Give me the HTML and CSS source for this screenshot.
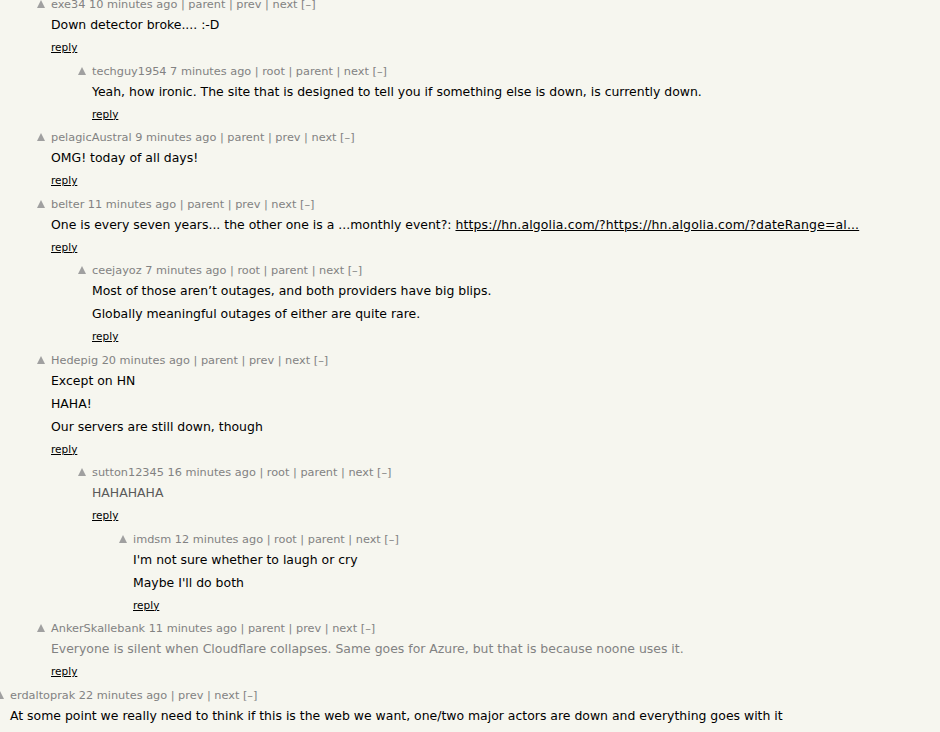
FILE: index.html
```html
<!DOCTYPE html>
<html>
<head>
    <meta charset="utf-8">
    <title>Hacker News comments</title>
    <link rel="stylesheet" href="styles.css">
</head>
<body>

<div class="comment-tree">

    <div class="comment level-1">
        <div class="votelinks"><span class="vote-arrow"></span></div>
        <div class="comment-body">
            <div class="comhead">exe34 10 minutes ago | parent | prev | next [–]</div>
            <div class="commtext">
                <p>Down detector broke.... :-D</p>
            </div>
            <div class="reply"><a href="#">reply</a></div>
        </div>
    </div>

    <div class="comment level-2">
        <div class="votelinks"><span class="vote-arrow"></span></div>
        <div class="comment-body">
            <div class="comhead">techguy1954 7 minutes ago | root | parent | next [–]</div>
            <div class="commtext">
                <p>Yeah, how ironic. The site that is designed to tell you if something else is down, is currently down.</p>
            </div>
            <div class="reply"><a href="#">reply</a></div>
        </div>
    </div>

    <div class="comment level-1">
        <div class="votelinks"><span class="vote-arrow"></span></div>
        <div class="comment-body">
            <div class="comhead">pelagicAustral 9 minutes ago | parent | prev | next [–]</div>
            <div class="commtext">
                <p>OMG! today of all days!</p>
            </div>
            <div class="reply"><a href="#">reply</a></div>
        </div>
    </div>

    <div class="comment level-1">
        <div class="votelinks"><span class="vote-arrow"></span></div>
        <div class="comment-body">
            <div class="comhead">belter 11 minutes ago | parent | prev | next [–]</div>
            <div class="commtext">
                <p>One is every seven years... the other one is a ...monthly event?: <a href="#" class="link">https://hn.algolia.com/?https://hn.algolia.com/?dateRange=al...</a></p>
            </div>
            <div class="reply"><a href="#">reply</a></div>
        </div>
    </div>

    <div class="comment level-2">
        <div class="votelinks"><span class="vote-arrow"></span></div>
        <div class="comment-body">
            <div class="comhead">ceejayoz 7 minutes ago | root | parent | next [–]</div>
            <div class="commtext">
                <p>Most of those aren’t outages, and both providers have big blips.</p>
                <p>Globally meaningful outages of either are quite rare.</p>
            </div>
            <div class="reply"><a href="#">reply</a></div>
        </div>
    </div>

    <div class="comment level-1">
        <div class="votelinks"><span class="vote-arrow"></span></div>
        <div class="comment-body">
            <div class="comhead">Hedepig 20 minutes ago | parent | prev | next [–]</div>
            <div class="commtext">
                <p>Except on HN</p>
                <p>HAHA!</p>
                <p>Our servers are still down, though</p>
            </div>
            <div class="reply"><a href="#">reply</a></div>
        </div>
    </div>

    <div class="comment level-2">
        <div class="votelinks"><span class="vote-arrow"></span></div>
        <div class="comment-body">
            <div class="comhead">sutton12345 16 minutes ago | root | parent | next [–]</div>
            <div class="commtext c5a">
                <p>HAHAHAHA</p>
            </div>
            <div class="reply"><a href="#">reply</a></div>
        </div>
    </div>

    <div class="comment level-3">
        <div class="votelinks"><span class="vote-arrow"></span></div>
        <div class="comment-body">
            <div class="comhead">imdsm 12 minutes ago | root | parent | next [–]</div>
            <div class="commtext">
                <p>I'm not sure whether to laugh or cry</p>
                <p>Maybe I'll do both</p>
            </div>
            <div class="reply"><a href="#">reply</a></div>
        </div>
    </div>

    <div class="comment level-1">
        <div class="votelinks"><span class="vote-arrow"></span></div>
        <div class="comment-body">
            <div class="comhead">AnkerSkallebank 11 minutes ago | parent | prev | next [–]</div>
            <div class="commtext c82">
                <p>Everyone is silent when Cloudflare collapses. Same goes for Azure, but that is because noone uses it.</p>
            </div>
            <div class="reply"><a href="#">reply</a></div>
        </div>
    </div>

    <div class="comment level-0">
        <div class="votelinks"><span class="vote-arrow"></span></div>
        <div class="comment-body">
            <div class="comhead">erdaltoprak 22 minutes ago | prev | next [–]</div>
            <div class="commtext">
                <p>At some point we really need to think if this is the web we want, one/two major actors are down and everything goes with it</p>
            </div>
        </div>
    </div>

</div>

</body>
</html>
```

FILE: styles.css
```css
* {
    box-sizing: border-box;
}

body {
    margin: 0;
    background: #f6f6ef;
    font-family: "DejaVu Sans", Verdana, sans-serif;
    color: #000;
    overflow: hidden;
}

.comment-tree {
    margin-top: -2px;
    margin-left: -4px;
}

.comment {
    display: flex;
    margin-bottom: 9.5px;
}

.level-1 {
    padding-left: 41px;
}

.level-2 {
    padding-left: 82px;
}

.level-3 {
    padding-left: 123px;
}

.votelinks {
    width: 14px;
    flex-shrink: 0;
    padding-top: 2px;
}

.vote-arrow {
    display: block;
    width: 0;
    height: 0;
    border-left: 4.5px solid transparent;
    border-right: 4.5px solid transparent;
    border-bottom: 8px solid #a0a0a0;
}

.comhead {
    font-size: 11.3px;
    line-height: 14px;
    color: #828282;
    white-space: nowrap;
}

.commtext {
    font-size: 12.45px;
    margin-top: 5px;
}

.commtext p {
    margin: 0;
    line-height: 16px;
    white-space: nowrap;
}

.commtext p + p {
    margin-top: 7px;
}

.commtext a {
    color: #000;
}

.commtext .link {
    letter-spacing: 0.15px;
}

.c5a {
    color: #5a5a5a;
}

.c82 {
    color: #828282;
}

.reply {
    margin-top: 6px;
    font-size: 10.5px;
    line-height: 16px;
}

.reply a {
    color: #000;
    text-decoration: underline;
}
```
